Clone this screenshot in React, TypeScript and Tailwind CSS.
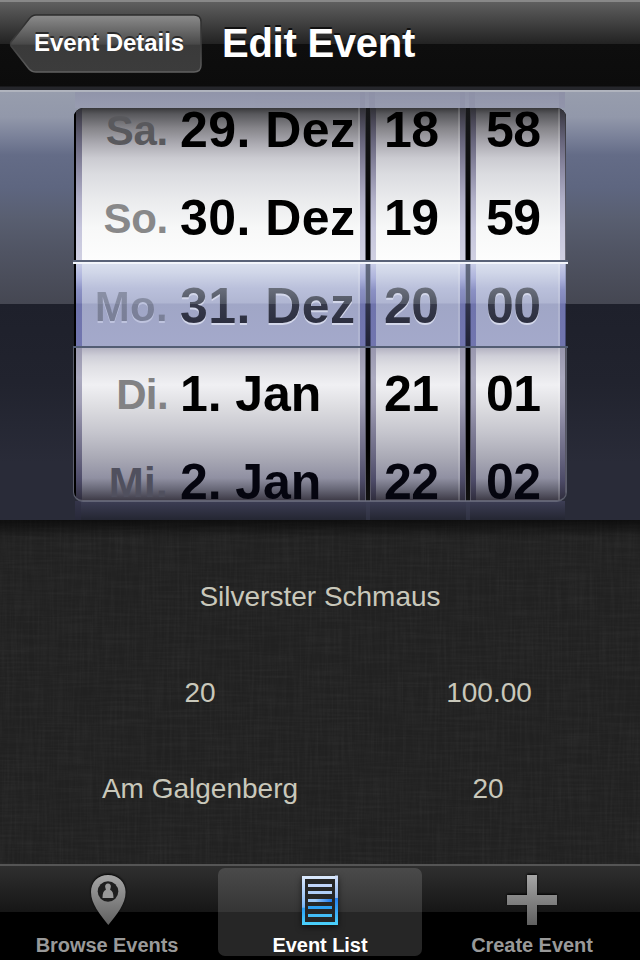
import React from "react";

const faceBg =
  "bg-[linear-gradient(to_bottom,#38383b_0px,#58585c_6px,#858489_20px,#aaa9b0_35px,#cbcbd1_50px,#dbdce0_66px,#e9eaec_90px,#f7f8f8_120px,#fdfdfd_153px,#dbe1f0_153px,#d0d6e8_165px,#bac0db_180px,#b0b6d2_195px,#a0a6c6_196px,#a4a9cb_239px,#b4b3c2_240px,#cfcfd8_248px,#dfdfe4_258px,#f0f0f3_277px,#dcdce0_300px,#c5c5cd_325px,#a9a9b5_350px,#9090a2_370px,#696978_381px,#3b3844_393px)]";
const edgeBg =
  "bg-[linear-gradient(to_bottom,#303036_0px,#4a4857_14px,#66647a_32px,#8b89a2_60px,#afaec6_90px,#c6c6dc_120px,#d0d0e2_153px,#ccd1e9_153px,#adb3dc_170px,#8b91c4_182px,#7f84b8_195px,#6f74ac_196px,#7175af_239px,#9997ae_240px,#abaabf_270px,#a09eb5_295px,#83819a_320px,#66647f_350px,#4d4b68_372px,#2e2c3b_393px)]";
const gapBg =
  "bg-[linear-gradient(to_bottom,#17181a_0px,#0c0d0e_70px,#000_110px,#000_153px,#626a80_153px,#555c70_195px,#30334a_196px,#1f2134_239px,#000_240px,#000_340px,#111_393px)]";
const lineBg =
  "bg-[linear-gradient(to_bottom,#333338_0px,#5c5c68_100px,#6e6e7a_153px,#a0a8c6_153px,#7b82a8_195px,#494e78_196px,#454a73_239px,#555560_240px,#5a5968_393px)]";

function Edge() {
  return <div className={`w-[5px] shrink-0 ${edgeBg}`} />;
}

function Divider() {
  return (
    <div className="flex shrink-0">
      <div className={`w-px ${lineBg}`} />
      <div className={`w-1 ${gapBg}`} />
      <div className={`w-px ${lineBg}`} />
    </div>
  );
}

const selectedDark =
  "bg-[linear-gradient(to_bottom,#6d727f_24px,#505563_42px,#36394a_42px,#2b2d3e_64px)] bg-clip-text text-transparent drop-shadow-[0_2px_0_#d3d7ea]";
const selectedSoft =
  "bg-[linear-gradient(to_bottom,#8c92a7_23px,#858ba1_41px,#7b8199_41px,#7a7f97_63px)] bg-clip-text text-transparent drop-shadow-[0_2px_0_#bec3de]";

const days = [
  ["Sa.", "29. Dez", "text-[#59595d] tracking-[-0.3px]", "tracking-[0.45px]"],
  ["So.", "30. Dez", "text-[#888889] tracking-[-0.3px]", "tracking-[0.45px]"],
  ["Mo.", "31. Dez", `${selectedSoft} tracking-[0.3px]`, "tracking-[0.45px]"],
  ["Di.", "1. Jan", "text-[#828284] tracking-[-0.6px]", "tracking-[-0.1px]"],
  ["Mi.", "2. Jan", "text-[#50505e] tracking-[0.3px]", "tracking-[-0.1px]"],
];

function DateWheel() {
  return (
    <div className={`w-[278px] shrink-0 border-r-2 border-white/15 ${faceBg}`}>
      <div className="-mt-[22px]">
        {days.map(([day, date, tone, spacing], i) => (
          <div key={day} className="flex h-[88px] whitespace-pre leading-[88px]">
            <span className={`mt-px h-[88px] w-[86px] text-right text-[42px] ${tone}`}>{day}</span>
            <span
              className={`ml-[12px] h-[88px] text-[50px] ${spacing} ${i === 2 ? selectedDark : i === 4 ? "text-[#05050f]" : "text-black"}`}
            >
              {date}
            </span>
          </div>
        ))}
      </div>
    </div>
  );
}

function NumberWheel({ values, pad }: { values: string[]; pad: string }) {
  return (
    <div className={`w-[84px] shrink-0 border-r-2 border-white/15 ${faceBg}`}>
      <div className={`-mt-[22px] ${pad}`}>
        {values.map((v, i) => (
          <div
            key={v}
            className={`h-[88px] text-[50px] leading-[88px] tracking-[-0.6px] ${i === 2 ? selectedDark : i === 4 ? "text-[#05050f]" : "text-black"}`}
          >
            {v}
          </div>
        ))}
      </div>
    </div>
  );
}

function Picker() {
  return (
    <section className="relative h-[428px] bg-[linear-gradient(to_bottom,#979dad_0px,#9298aa_25px,#7a8199_45px,#646c87_63px,#5e6680_95px,#595f71_125px,#505463_160px,#454752_212px,#1e202b_212px,#21232e_290px,#292b38_370px,#292b38_428px)]">
      <div className="flex h-full flex-col">
        <div className="mx-auto flex h-4 w-[490px] bg-[linear-gradient(to_bottom,#8e91a8,#9a9db3)] opacity-70">
          <div className="ml-[285px] h-full w-[5px] bg-[#85859f]/40" />
          <div className="ml-1 h-full w-[6px] bg-[#85859f]/40" />
          <div className="ml-[85px] h-full w-[5px] bg-[#85859f]/40" />
          <div className="ml-1 h-full w-[6px] bg-[#85859f]/40" />
          <div className="ml-auto h-full w-[6px] bg-[#85859f]/40" />
        </div>
        <div className="relative mx-auto h-[393px] w-[492px]">
          <div className="flex h-full overflow-hidden rounded-[9px] bg-black font-bold">
            <div className="w-0.5 shrink-0 bg-black" />
            <div className={`w-px shrink-0 ${edgeBg}`} />
            <Edge />
            <DateWheel />
            <Edge />
            <Divider />
            <Edge />
            <NumberWheel values={["18", "19", "20", "21", "22"]} pad="pl-[8px]" />
            <Edge />
            <Divider />
            <Edge />
            <NumberWheel values={["58", "59", "00", "01", "02"]} pad="pl-[10px]" />
            <Edge />
            <div className={`w-px shrink-0 ${lineBg}`} />
          </div>
          <div className="absolute inset-x-[-1px] bottom-[-1px] h-[154px] rounded-b-[10px] border-x border-b-2 border-[#737585]/70" />
          <div className="absolute -left-px top-[152px] h-[88px] w-[495px] border-b-2 border-t-2 border-b-[#535d74] border-t-[#596278]">
            <div className="h-[2px] bg-[#f2f5fb]" />
          </div>
        </div>
        <div className="mx-auto flex h-[19px] w-[490px] bg-[linear-gradient(to_bottom,#3d3e55,#242632)]">
          <div className="h-full w-[6px] bg-[#2b2c40]/50" />
          <div className="ml-[285px] h-full w-1 bg-[#41435a]/40" />
          <div className="ml-[96px] h-full w-1 bg-[#41435a]/40" />
        </div>
      </div>
    </section>
  );
}

function Linen() {
  return (
    <svg className="absolute inset-0 h-full w-full" aria-hidden="true">
      <filter id="across" x="0" y="0" width="100%" height="100%">
        <feTurbulence type="fractalNoise" baseFrequency="0.02 0.4" numOctaves="2" seed="4" />
        <feColorMatrix values="0 0 0 0 1  0 0 0 0 1  0 0 0 0 1  0.5 0 0 0 -0.17" />
      </filter>
      <filter id="down" x="0" y="0" width="100%" height="100%">
        <feTurbulence type="fractalNoise" baseFrequency="0.4 0.02" numOctaves="2" seed="9" />
        <feColorMatrix values="0 0 0 0 1  0 0 0 0 1  0 0 0 0 1  0.5 0 0 0 -0.17" />
      </filter>
      <rect width="100%" height="100%" filter="url(#across)" opacity="0.1" />
      <rect width="100%" height="100%" filter="url(#down)" opacity="0.1" />
    </svg>
  );
}

function Tab({ label, active, shift = "", children }: { label: string; active?: boolean; shift?: string; children: React.ReactNode }) {
  return (
    <div
      className={`flex h-[88px] w-[204px] flex-col items-center rounded-[7px] pt-[7px] ${shift} ${
        active
          ? "bg-[linear-gradient(to_bottom,#4a4a4a_0px,#353535_44px,#262626_44px,#262626_88px)] text-white"
          : "text-[#999]"
      }`}
    >
      <div className="h-[50px] shrink-0">{children}</div>
      <span className="mt-[9px] whitespace-nowrap text-[20px] font-bold leading-[22px] tracking-[-0.05px]">{label}</span>
    </div>
  );
}

export default function App() {
  return (
    <div className="flex h-[960px] w-[640px] flex-col overflow-hidden bg-black font-['Liberation_Sans',Arial,sans-serif]">
      <header className="relative flex h-[92px] shrink-0 items-start border-b-2 border-[#b0b4be] bg-[linear-gradient(to_bottom,#888_0px,#888_2px,#5f5f5f_2px,#222_44px,#0e0e0e_44px,#0c0c0c_86px,#25262b_87px,#25262b_90px)]">
        <div className="relative ml-[9px] mt-[13px] h-[62px] w-[194px]">
          <svg className="absolute inset-0" width="194" height="62" viewBox="0 0 194 62" aria-hidden="true">
            <defs>
              <linearGradient id="back" x1="0" y1="0" x2="0" y2="1">
                <stop offset="0" stopColor="#8c8c8c" />
                <stop offset=".51" stopColor="#494949" />
                <stop offset=".53" stopColor="#3a3a3a" />
                <stop offset="1" stopColor="#3c3c3c" />
              </linearGradient>
              <linearGradient id="rim" x1="0" y1="0" x2="0" y2="1">
                <stop offset="0" stopColor="#2c2c2c" />
                <stop offset=".5" stopColor="#3c3c3c" />
                <stop offset="1" stopColor="#606060" />
              </linearGradient>
            </defs>
            <path
              d="M27 2H185Q192 2 192 9V52Q192 59 185 59H27Q23 59 20 56L2 33Q1 31 2 29L20 6Q23 2 27 2Z"
              fill="url(#back)"
              stroke="url(#rim)"
              strokeWidth="1.5"
            />
          </svg>
          <span className="relative block whitespace-nowrap pl-[25px] pt-[16px] text-[24px] font-bold leading-[28px] tracking-[-0.05px] text-white [text-shadow:0_-2px_0_#2a2a2a]">
            Event Details
          </span>
        </div>
        <h1 className="ml-[19px] mt-[20px] whitespace-nowrap text-[40px] font-bold leading-[46px] tracking-[-0.25px] text-white [text-shadow:0_-2px_0_#111]">
          Edit Event
        </h1>
      </header>

      <Picker />

      <main className="relative h-[344px] shrink-0 bg-[#212121] text-[28px] text-[#c9c8bb]">
        <Linen />
        <div className="absolute inset-x-0 top-0 h-[18px] bg-[linear-gradient(to_bottom,#0009,transparent)]" />
        <div className="relative pt-[29px]">
          <div className="flex h-24 items-center justify-center">Silverster Schmaus</div>
          <div className="ml-[56px] grid w-[576px] grid-cols-2 text-center leading-[96px]">
            <div>20</div>
            <div className="pl-0.5">100.00</div>
            <div>Am Galgenberg</div>
            <div>20</div>
          </div>
        </div>
      </main>

      <nav className="flex h-24 shrink-0 justify-between bg-[linear-gradient(to_bottom,#555_0px,#555_2px,#2f2f2f_2px,#161616_48px,#000_48px)] px-[5px] pt-1">
        <Tab label="Browse Events">
          <svg width="50" height="50" viewBox="0 0 50 50" className="drop-shadow-[0_-1px_1px_#000]" aria-hidden="true">
            <defs>
              <linearGradient id="gray" gradientUnits="userSpaceOnUse" x1="0" y1="0" x2="0" y2="50">
                <stop offset="0" stopColor="#a6a6a6" />
                <stop offset="1" stopColor="#606060" />
              </linearGradient>
            </defs>
            <path d="M26 0C16 0 9 7 9 17C9 29 18 39 26.300 50C35 39 43.600 29 43.600 17C43.600 7 36 0 26 0Z" fill="url(#gray)" />
            <circle cx="26" cy="16.500" r="10.300" fill="#1e1e1e" />
            <path d="M23.300 12.500a2.900 2.900 0 1 1 5.400 0l-.6 2.300c2.200.8 3.400 3.400 3.400 8.200h-11c0-4.800 1.200-7.400 3.400-8.200Z" fill="#999" />
          </svg>
        </Tab>
        <Tab label="Event List" active>
          <svg width="50" height="50" viewBox="0 0 50 50" className="drop-shadow-[0_2px_3px_#0009]" aria-hidden="true">
            <defs>
              <linearGradient id="sheet" gradientUnits="userSpaceOnUse" x1="0" y1="1" x2="0" y2="50">
                <stop offset="0" stopColor="#dce9fc" />
                <stop offset=".42" stopColor="#a3c9f8" />
                <stop offset=".64" stopColor="#77b5f7" />
                <stop offset=".65" stopColor="#279cf3" />
                <stop offset="1" stopColor="#4cd3fb" />
              </linearGradient>
              <linearGradient id="sheetRight" gradientUnits="userSpaceOnUse" x1="0" y1="1" x2="0" y2="50">
                <stop offset="0" stopColor="#d3e0fa" />
                <stop offset=".44" stopColor="#91b8f1" />
                <stop offset=".45" stopColor="#267ff0" />
                <stop offset="1" stopColor="#4cd3fb" />
              </linearGradient>
              <linearGradient id="fold" x1="0" y1="0" x2="1" y2="0">
                <stop offset=".3" stopColor="#9dc8f8" />
                <stop offset="1" stopColor="#1878ef" />
              </linearGradient>
            </defs>
            <rect x="8.500" y="2.500" width="33" height="46" fill="#262626" stroke="url(#sheet)" strokeWidth="3" />
            <rect x="40" y="1" width="3" height="49" fill="url(#sheetRight)" />
            <rect x="40" y="0" width="3" height="1" fill="#7d8795" />
            <rect x="13" y="9" width="24" height="3" fill="#c0d4f8" />
            <rect x="13" y="16" width="24" height="3" fill="#afcdf7" />
            <rect x="13" y="24" width="24" height="3" fill="url(#fold)" />
            <rect x="13" y="31" width="24" height="3" fill="#2ca0f4" />
            <rect x="13" y="39" width="24" height="3" fill="#43bef7" />
          </svg>
        </Tab>
        <Tab label="Create Event" shift="-translate-x-px">
          <svg width="50" height="50" viewBox="0 0 50 50" className="drop-shadow-[0_-1px_1px_#000]" aria-hidden="true">
            <defs>
              <linearGradient id="plus" x1="0" y1="0" x2="0" y2="1">
                <stop offset="0" stopColor="#a6a6a6" />
                <stop offset="1" stopColor="#606060" />
              </linearGradient>
            </defs>
            <path d="M20 0H30V20H50V30H30V50H20V30H0V20H20Z" fill="url(#plus)" />
          </svg>
        </Tab>
      </nav>
    </div>
  );
}
